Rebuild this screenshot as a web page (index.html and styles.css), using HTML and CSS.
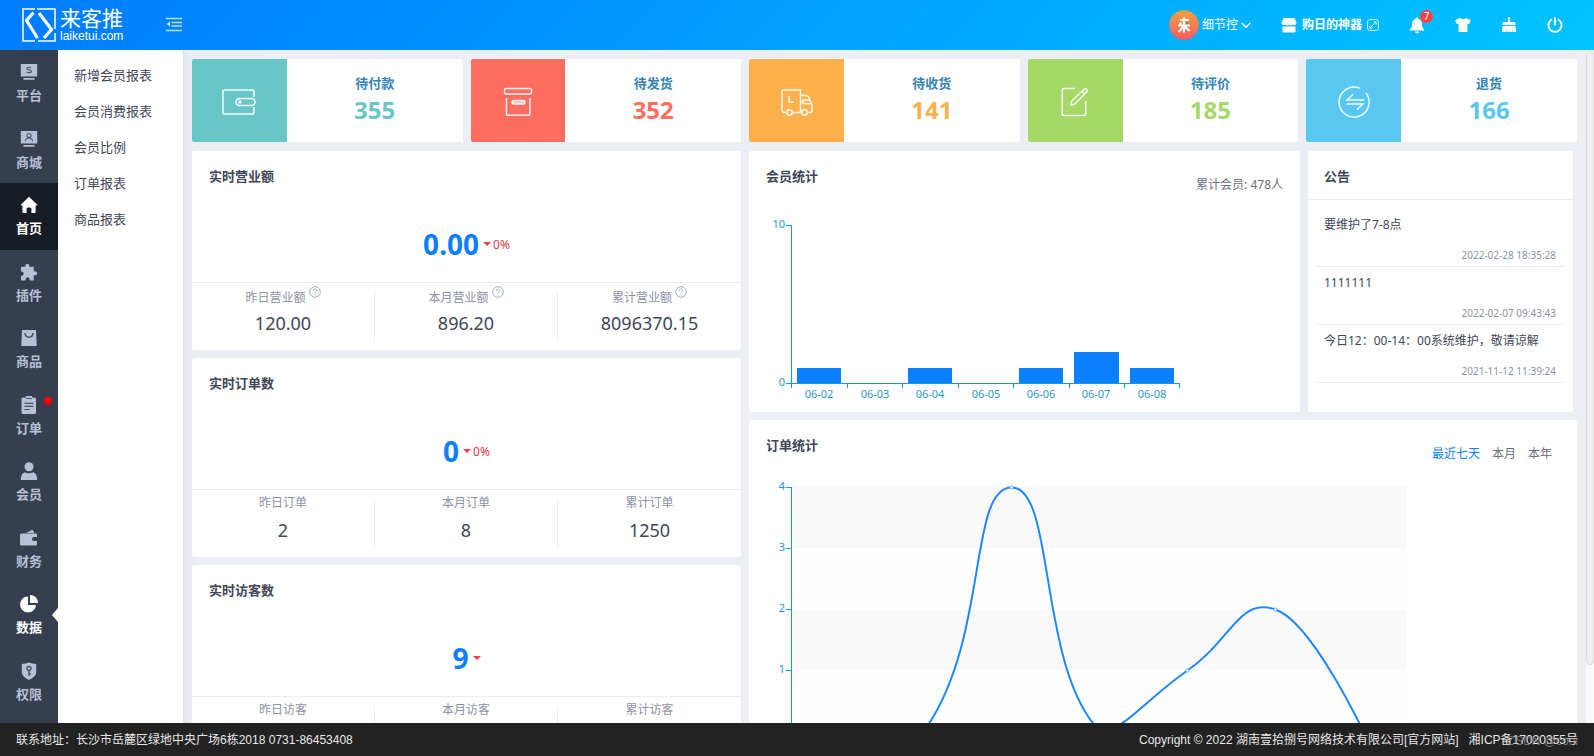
FILE: index.html
```html
<!DOCTYPE html>
<html lang="zh-CN">
<head>
<meta charset="utf-8">
<title>来客推</title>
<link rel="stylesheet" href="styles.css">
</head>
<body>
<div class="app">
  <header class="header">
    <a class="logo" href="#">
      <svg width="34" height="35" viewBox="0 0 34 35" fill="none" stroke="#fff"><path d="M13 1H1v32h12M16 33h17V25M15 1h18v20" stroke-width="1.500"/><path d="M11.500 4.500 4.500 12.500 15.500 30" stroke-width="3.200"/><path d="M17 5 29.500 21.500 22 30" stroke-width="3.200"/></svg>
      <span class="logo-text"><span class="logo-name">来客推</span><span class="logo-domain">laiketui.com</span></span>
    </a>
    <button class="icon-btn fold" aria-label="折叠菜单">
      <svg width="16" height="15" viewBox="0 0 16 15" fill="none" stroke="#b9dcff" stroke-width="1.300"><path d="M0 1.500h16M5.500 5.500H16M5.500 9H16M0 13.500h16"/><path d="M4 4.500v5L.5 7z" fill="#d3e8ff" stroke="none"/></svg>
    </button>
    <div class="tools">
      <button class="user"><span class="avatar"><svg width="30" height="30" viewBox="0 0 30 30"><defs><linearGradient id="av" x1="0" y1="0" x2="0" y2="1"><stop offset="0" stop-color="#f5a33a"/><stop offset="1" stop-color="#f95a62"/></linearGradient></defs><circle cx="15" cy="15" r="14.700" fill="url(#av)"/><path d="M11 10h9M9 15.500h12M15 7.500v15M15 16l-5.500 6M15 16l5.500 5M11 12.500l1 2" stroke="#fff" stroke-width="2.200" fill="none"/><circle cx="18.500" cy="13" r="1.200" fill="#3c9b62"/></svg></span>细节控<svg class="caret" width="10" height="7" viewBox="0 0 10 7" fill="none" stroke="#fff" stroke-width="1.400"><path d="M.8 1 5 5.300 9.200 1"/></svg></button>
      <a class="shop" href="#"><svg width="16" height="15" viewBox="0 0 16 15" fill="#fff"><path d="M2.500 0h11L15.500 4.500c0 3-3 3.200-3.800 1.700-1 1.800-3 1.500-3.700.2-.7 1.300-2.700 1.600-3.700-.2C3.500 7.700.5 7.500.5 4.500z"/><path d="M1.500 8.300c1.200.5 2.200.2 2.900-.4 1 .8 2.500.8 3.600 0 1.100.8 2.600.8 3.600 0 .7.600 1.700.9 2.900.4V13c0 1-.5 1.500-1.500 1.500H3c-1 0-1.500-.5-1.500-1.500z"/></svg><b>购日的神器</b><svg width="12" height="12" viewBox="0 0 12 12" fill="none" stroke="#d6f3ff"><rect x=".6" y=".6" width="10.800" height="10.800" rx="2"/><path d="M3 9 9 3M6.500 2.800h2.700v2.700M2.800 6.500v2.700h2.700"/></svg></a>
      <button class="icon-btn bell" aria-label="消息"><svg width="16" height="17" viewBox="0 0 16 17" fill="#fff"><path d="M8 .5c.8 0 1.200.6 1.200 1.300 2.500.6 3.800 2.700 3.800 5.200 0 3 .7 4.300 2.200 5.300v1.200H.8v-1.200C2.300 11.300 3 10 3 7c0-2.500 1.300-4.600 3.800-5.200C6.800 1.100 7.200.5 8 .5zM6 14.500h4c-.2 1.200-1 2-2 2s-1.800-.8-2-2z"/></svg><span class="badge">7</span></button>
      <button class="icon-btn" aria-label="主题"><svg width="16" height="16" viewBox="0 0 16 16" fill="#fff"><path d="M5 .8c.8 1.600 5.200 1.600 6 0l4.700 2.500-1.500 4-1.800-.6V15H3.500V6.700l-1.800.6-1.500-4z"/></svg></button>
      <button class="icon-btn" aria-label="清理缓存"><svg width="16" height="16" viewBox="0 0 16 16" fill="#fff"><path d="M6.900 0h2.200v5H13c1 0 1.500.5 1.500 1.500V8h-13V6.500c0-1 .5-1.500 1.500-1.500h3.900zM1.700 9h12.600l1 6h-3l-.5-2-.3 2H9.300L9 13l-.3 2H6.300L6 13l-1 2H.7z"/></svg></button>
      <button class="icon-btn" aria-label="退出"><svg width="16" height="16" viewBox="0 0 16 16" fill="none" stroke="#fff" stroke-width="1.900" stroke-linecap="round"><path d="M4.300 2.800a6.600 6.600 0 1 0 7.400 0M8 1v6.500"/></svg></button>
    </div>
  </header>

  <div class="body">
    <nav class="sidebar">
      <a href="#"><svg width="18" height="18" viewBox="0 0 18 18"><path d="M.8 1h16.400v12.500H.8zM3.500 15h11v1.700h-11z" fill="#b6c0d6"/><path d="M11.300 5c-.8-1-4.300-1.200-4.300.6 0 2 4.300.7 4.300 2.700 0 1.800-3.600 1.700-4.600.5" fill="none" stroke="#4a5568" stroke-width="1.200"/></svg>平台</a>
      <a href="#"><svg width="18" height="18" viewBox="0 0 18 18"><path d="M.8 1h16.400v12.500H.8zM3.500 15h11v1.700h-11z" fill="#b6c0d6"/><g fill="none" stroke="#4a5568" stroke-width="1.100"><circle cx="9" cy="5.500" r="2"/><path d="M5.500 11.300c0-4.500 7-4.500 7 0"/></g></svg>商城</a>
      <a class="current" href="#"><svg width="18" height="18" viewBox="0 0 18 18" fill="#fff"><path d="M9 .8 17 8.500c.4.500.2 1-.4 1h-1V16c0 .7-.4 1-1 1h-3.200v-4.500c0-1.500-4.800-1.500-4.800 0V17H3.400c-.6 0-1-.3-1-1V9.500h-1c-.6 0-.8-.5-.4-1z"/></svg>首页</a>
      <a href="#"><svg width="18" height="18" viewBox="0 0 18 19" fill="#b6c0d6"><path d="M.5 4h4.700C4.400-.3 10-.3 9.300 4H14v4.700c5-.8 5 5 0 4.200V18.500H9.800c.6-4.700-5-4.700-4.500 0H.5v-5c3.800.4 3.800-5 0-4.600z"/></svg>插件</a>
      <a href="#"><svg width="18" height="18" viewBox="0 0 18 18"><path d="M3 1h12c.8 0 1 .4 1.100 1l.6 13.500c0 1-.4 1.500-1.400 1.500H2.700c-1 0-1.400-.5-1.400-1.500L1.900 2c.1-.6.300-1 1.100-1z" fill="#b6c0d6"/><path d="M5 4c.3 5.500 7.700 5.500 8 0" fill="none" stroke="#4a5568" stroke-width="1.500"/></svg>商品</a>
      <a href="#"><svg width="18" height="18" viewBox="0 0 18 18"><rect x="1.500" y="1.500" width="14.500" height="16.500" rx="1.500" fill="#b6c0d6"/><path d="M6 0h6v2.500H6z" fill="#b6c0d6"/><path d="M6 2.500h6M4.500 7.300h9M4.500 10.300h9M4.500 13.500h5" stroke="#4a5568" stroke-width="1.200"/></svg>订单<i class="dot"></i></a>
      <a href="#"><svg width="18" height="18" viewBox="0 0 18 18" fill="#b6c0d6"><circle cx="9" cy="4.700" r="4.500"/><path d="M.8 18c0-5 2-7.500 4.500-7.500 1.500.9 5.900.9 7.400 0 2.500 0 4.500 2.500 4.500 7.500z"/></svg>会员</a>
      <a href="#"><svg width="18" height="18" viewBox="0 0 18 18" fill="#b6c0d6"><path d="M6 4 12.500.8l2 3.200zM1.800 4.500h14c.9 0 1.200.4 1.200 1.200V8h-3a2 2 0 0 0 0 4H17V15c0 1-.4 1.500-1.400 1.500H1.500C.5 16.500 0 16 0 15V6C0 5 .9 4.500 1.800 4.500z"/></svg>财务</a>
      <a class="open" href="#"><svg width="18" height="18" viewBox="0 0 18 18" fill="#fff"><path d="M8 1.500V10h8a8 8 0 1 1-8-8.500z"/><path d="M10 0a8 8 0 0 1 8 8h-8z"/></svg>数据</a>
      <a href="#"><svg width="18" height="18" viewBox="0 0 18 18"><path d="M9 .3c2 1.200 4.500 1.700 7.200 1.700v8c0 3.500-3.200 6-7.200 8-4-2-7.200-4.500-7.200-8V2C4.500 2 7 1.500 9 .3z" fill="#b6c0d6"/><g fill="none" stroke="#4a5568" stroke-width="1.400"><circle cx="9" cy="6.500" r="2"/><path d="M9 8.500V14M9 12h2"/></g></svg>权限</a>
    </nav>
    <nav class="submenu">
      <a href="#">新增会员报表</a><a href="#">会员消费报表</a><a href="#">会员比例</a><a href="#">订单报表</a><a href="#">商品报表</a>
    </nav>
    <main class="main">
      <section class="stats">
        <a class="stat teal" href="#"><span class="stat-icon"><svg width="34" height="26" viewBox="0 0 34 26"><path d="M32 8V2c0-.6-.4-1-1-1H2c-.6 0-1 .4-1 1v22c0 .6.400 1 1 1h29c.6 0 1-.4 1-1v-6"/><rect x="14" y="9.500" width="19" height="7" rx="3.500"/><circle cx="18" cy="13" r="1"/></svg></span><span class="stat-text"><b>待付款</b><strong>355</strong></span></a>
        <a class="stat red" href="#"><span class="stat-icon"><svg width="30" height="30" viewBox="0 0 30 30"><rect x="1.500" y="1.500" width="27" height="5.500" rx="1.500"/><path d="M3.500 11v16c0 .8.400 1.200 1.200 1.200h21c.8 0 1.200-.4 1.200-1.200V11"/><rect x="9" y="13.500" width="13" height="3.500" rx="1.500" fill="#ffc4bd"/></svg></span><span class="stat-text"><b>待发货</b><strong>352</strong></span></a>
        <a class="stat orange" href="#"><span class="stat-icon"><svg width="32" height="27" viewBox="0 0 32 27"><path d="M5 23.500H3.500c-1.700 0-2.500-.8-2.500-2.500V2c0-.7.300-1 1-1h17.500v22.500H12M19.500 6.500h5c2.500 0 3.500 1.300 4.200 4l2.300 5V22c0 1-.5 1.500-1.500 1.500H27"/><path d="M30.500 14.500H23c-1 0-1.500-.5-1.500-1.500 0-1.500 1-2 2-2h5M8 7v6h5"/><circle cx="8.500" cy="23.500" r="2.700"/><circle cx="23.500" cy="23.500" r="2.700"/></svg></span><span class="stat-text"><b>待收货</b><strong>141</strong></span></a>
        <a class="stat green" href="#"><span class="stat-icon"><svg width="28" height="30" viewBox="0 0 28 30"><path d="M14 1.500H2.500c-.8 0-1.200.4-1.200 1.200v24.600c0 .8.400 1.200 1.200 1.200h21c.8 0 1.200-.4 1.200-1.200V14"/><path d="M10.500 14.200 22.700 2.500c1-1 2.200-.9 2.900-.2s.8 1.900-.2 2.900L13.700 17.200l-3.500.9zM21 4l3 3"/></svg></span><span class="stat-text"><b>待评价</b><strong>185</strong></span></a>
        <a class="stat blue" href="#"><span class="stat-icon"><svg width="32" height="32" viewBox="0 0 32 32"><path d="M22 2.300A15 15 0 1 0 28 7M15 8.500l-6 5.500h17M8.500 18H25l-6 5.500"/></svg></span><span class="stat-text"><b>退货</b><strong>166</strong></span></a>
      </section>
      <div class="columns">
        <div class="left">
          <section class="card live">
            <h2>实时营业额</h2>
            <div class="headline"><strong>0.00</strong><i class="down"></i><span>0%</span></div>
            <dl class="figures"><div><dt>昨日营业额<svg class="q" viewBox="0 0 12 12"><circle cx="6" cy="6" r="5.300"/><path d="M4.300 4.800c0-2.300 3.400-2.200 3.400-.2C7.700 6 6 5.800 6 7.300M6 8.300v1"/></svg></dt><dd>120.00</dd></div><div><dt>本月营业额<svg class="q" viewBox="0 0 12 12"><circle cx="6" cy="6" r="5.300"/><path d="M4.300 4.800c0-2.300 3.400-2.200 3.400-.2C7.700 6 6 5.800 6 7.300M6 8.300v1"/></svg></dt><dd>896.20</dd></div><div><dt>累计营业额<svg class="q" viewBox="0 0 12 12"><circle cx="6" cy="6" r="5.300"/><path d="M4.300 4.800c0-2.300 3.400-2.200 3.400-.2C7.700 6 6 5.800 6 7.300M6 8.300v1"/></svg></dt><dd>8096370.15</dd></div></dl>
          </section>
          <section class="card live">
            <h2>实时订单数</h2>
            <div class="headline"><strong>0</strong><i class="down"></i><span>0%</span></div>
            <dl class="figures plain"><div><dt>昨日订单</dt><dd>2</dd></div><div><dt>本月订单</dt><dd>8</dd></div><div><dt>累计订单</dt><dd>1250</dd></div></dl>
          </section>
          <section class="card live">
            <h2>实时访客数</h2>
            <div class="headline"><strong>9</strong><i class="down"></i></div>
            <dl class="figures plain"><div><dt>昨日访客</dt></div><div><dt>本月访客</dt></div><div><dt>累计访客</dt></div></dl>
          </section>
        </div>
        <div class="right">
          <div class="right-top">
            <section class="card chart-card">
              <div class="card-head"><h2>会员统计</h2><p>累计会员: 478人</p></div>
              <svg class="chart" width="440" height="190" viewBox="0 0 440 190">
                <g class="bars"><rect x="48" y="152" width="44" height="16"/><rect x="159" y="152" width="44" height="16"/><rect x="270" y="152" width="44" height="16"/><rect x="325" y="136" width="45" height="32"/><rect x="381" y="152" width="44" height="16"/></g>
                <path class="axis" d="M37 9.500h5M42.500 9v163M37 167.500h394M98.500 167v5M153.500 167v5M209.500 167v5M264.500 167v5M320.500 167v5M375.500 167v5M430.500 167v5"/>
                <g class="labels"><g text-anchor="end"><text x="36" y="12">10</text><text x="36" y="170">0</text></g><g text-anchor="middle"><text x="70" y="182">06-02</text><text x="126" y="182">06-03</text><text x="181" y="182">06-04</text><text x="237" y="182">06-05</text><text x="292" y="182">06-06</text><text x="347" y="182">06-07</text><text x="403" y="182">06-08</text></g></g>
              </svg>
            </section>
            <section class="card notices">
              <h2>公告</h2>
              <ul>
                <li><a href="#">要维护了7-8点</a><time>2022-02-28 18:35:28</time></li>
                <li><a href="#">1111111</a><time>2022-02-07 09:43:43</time></li>
                <li><a href="#">今日12：00-14：00系统维护，敬请谅解</a><time>2021-11-12 11:39:24</time></li>
              </ul>
            </section>
          </div>
          <section class="card chart-card orders">
            <div class="card-head"><h2>订单统计</h2><div class="tabs"><button class="on">最近七天</button><button>本月</button><button>本年</button></div></div>
            <svg class="chart" width="670" height="290" viewBox="0 0 670 290">
              <path d="M43 2h615v61H43zM43 125h615v61H43z" fill="#f9f9f9"/>
              <path d="M43 63h615v62H43zM43 186h615v61H43z" fill="#fefefe"/>
              <path class="axis" d="M37 2.500h5M37 63.500h5M37 124.500h5M37 185.500h5M37 246.500h621M42.500 2v250"/>
              <path class="curve" d="M87 246C87 246 153 246 175 246C240.500 155 218.700 2.500 262.700 2.500S288.300 181 350.600 246C376 246 394.500 216 438.500 185.500S489.800 112 526.400 124.500S614 246 614 246"/>
              <g class="points"><circle cx="262.700" cy="2.500" r="1.600"/><circle cx="438.500" cy="185.500" r="1.600"/><circle cx="526.400" cy="124.500" r="1.600"/></g>
              <g class="labels" text-anchor="end"><text x="36" y="5">4</text><text x="36" y="66">3</text><text x="36" y="127">2</text><text x="36" y="188">1</text></g>
            </svg>
          </section>
        </div>
      </div>
    </main>
    <div class="scroll"><div class="thumb"></div></div>
  </div>

  <footer class="footer">
    <span>联系地址：长沙市岳麓区绿地中央广场6栋2018 0731-86453408</span>
    <span class="copy"><span>Copyright © 2022 湖南壹拾捌号网络技术有限公司[<a href="#">官方网站</a>]</span><span>湘ICP备17020355号</span><span class="mark">CSDN @coni</span></span>
  </footer>
</div>
</body>
</html>
```
FILE: styles.css
```css
* { box-sizing: border-box; }
body, h2, p, ul, dl, dd { margin: 0; padding: 0; }
body { font: 12px/18px "Noto Sans", "Noto Sans CJK SC", sans-serif; color: #414658; }
a { color: inherit; text-decoration: none; }
button { border: 0; padding: 0; background: none; color: inherit; font: inherit; cursor: pointer; }
svg { display: block; flex: none; overflow: visible; }
ul { list-style: none; }

.app { display: flex; flex-direction: column; height: 100vh; overflow: hidden; }

.header { flex: none; display: flex; align-items: center; height: 50px; padding: 0 31px 0 22px; color: #fff; background: linear-gradient(135deg, #007bff, #00c4ff); }
.logo { display: flex; gap: 4px; align-items: center; }
.logo-text { display: flex; flex-direction: column; }
.logo-name { font-size: 21px; line-height: 22px; font-weight: 400; }
.logo-domain { font: 12px/14px "Liberation Sans", sans-serif; }
.icon-btn { position: relative; display: flex; }
.fold { margin-left: 43px; padding-bottom: 2px; }
.tools { display: flex; align-items: center; margin-left: auto; gap: 30px; }
.user { display: flex; align-items: center; gap: 3px; }
.shop { display: flex; align-items: center; gap: 5px; }
.badge { position: absolute; left: 11px; top: -7px; width: 13px; height: 13px; border-radius: 50%; background: #ff4040; font-size: 10px; line-height: 13px; text-align: center; }

.body { flex: 1; display: flex; min-height: 0; }
.sidebar { flex: none; width: 58px; display: flex; flex-direction: column; padding-bottom: 8px; background: #353f4f; color: #b6c0d6; font-weight: 700; }
.sidebar a { position: relative; flex: 1; display: flex; flex-direction: column; align-items: center; gap: 5px; padding-top: 13px; font-size: 13px; line-height: 18px; min-height: 0; }
.sidebar .current { background: #161d24; color: #fff; }
.sidebar .open { color: #fff; }
.sidebar .open::after { content: ""; position: absolute; right: 0; top: 26px; border: 7px solid transparent; border-right: 6px solid #fff; border-left: 0; }
.dot { position: absolute; right: 6px; top: 14px; width: 8px; height: 8px; border-radius: 50%; background: #f00; }
.submenu { flex: none; width: 125px; padding: 7px 16px; background: #fff; font-size: 13px; line-height: 36px; }
.submenu a { display: block; }

.main { flex: 1; min-width: 0; padding: 9px 9px 0; overflow: hidden; background: linear-gradient(90deg, #e2e7ec, #ebeff4 9px); }
.stats { display: grid; grid-template-columns: repeat(5, 1fr); gap: 8px; margin-bottom: 9px; }
.stat { display: flex; height: 83px; border-radius: 2px; overflow: hidden; background: #fff; }
.stat-icon { width: 35%; display: flex; align-items: center; justify-content: center; padding-top: 3px; }
.stat-icon svg { fill: none; stroke: #fff; stroke-width: 1.5; stroke-opacity: .9; }
.stat-text { flex: 1; display: flex; flex-direction: column; align-items: center; padding-top: 14px; }
.stat-text b { font-size: 13px; line-height: 20px; color: #3484b4; }
.stat-text strong { font-size: 24px; line-height: 34px; }
.teal strong { color: #68c7c6; } .teal .stat-icon { background: #68c7c6; }
.red strong { color: #ff6c60; } .red .stat-icon { background: #ff6c60; }
.orange strong { color: #feb04c; } .orange .stat-icon { background: #feb04c; }
.green strong { color: #a6d867; } .green .stat-icon { background: #a6d867; }
.blue strong { color: #58c8f3; } .blue .stat-icon { background: #58c8f3; }

.columns { display: grid; grid-template-columns: 549fr 828fr; gap: 8px; }
.left, .right { display: flex; flex-direction: column; gap: 8px; min-width: 0; }
.card { background: #fff; border-radius: 3px; }
.card h2 { font-size: 13px; line-height: 20px; font-weight: 700; color: #414658; }
.live { height: 199px; }
.live h2 { padding: 15px 17px 0; }
.headline { display: flex; align-items: center; justify-content: center; height: 96px; padding-top: 20px; gap: 4px; color: #e33b4c; }
.headline strong { font-size: 28px; line-height: 38px; color: #0a80ff; }
.headline span { margin-left: -2px; padding-top: 1px; }
.down { border: 4px solid transparent; border-top-color: #ff3b46; border-bottom: 0; }
.figures { display: grid; grid-template-columns: repeat(3, 1fr); padding-top: 9px; border-top: 1px solid #ebecf0; text-align: center; }
.figures > div { height: 50px; border-right: 1px solid #ebecf0; }
.figures > div:last-child { border-right: 0; }
.figures dt { display: flex; justify-content: center; gap: 3px; height: 18px; line-height: 12px; color: #8b91a5; }
.figures dd { font-size: 18px; line-height: 26px; }
.q { width: 12px; height: 12px; fill: none; stroke: #a4abc0; margin-top: -6px; }
.plain dt { line-height: 8px; }

.right-top { display: grid; grid-template-columns: 551fr 265fr; gap: 8px; padding-right: 4px; }
.card-head { display: flex; justify-content: space-between; padding: 15px 17px 0; height: 65px; }
.card-head p { padding-top: 10px; color: #6a6f7b; }
.chart-card { height: 261px; }
.bars { fill: #0a80ff; }
.axis { fill: none; stroke: #1c96d4; }
.labels { font-size: 11px; fill: #2a97cc; }
.notices h2 { padding: 15px 16px 13px; border-bottom: 1px solid #ebecf0; }
.notices ul { padding: 9px 9px 0 8px; }
.notices li { height: 58px; padding: 7px 8px 0; border-bottom: 1px solid #ebecf0; }
.notices li a { display: block; }
.notices time { display: block; margin-top: 12px; font-size: 10px; line-height: 18px; text-align: right; color: #8b91a5; }
.orders { height: 320px; }
.tabs { display: flex; gap: 12px; padding: 10px 8px 0 0; height: 28px; color: #6a6f7b; }
.tabs .on { color: #0a80ff; }
.curve { fill: none; stroke: #1e88fa; stroke-width: 2; }
.points { fill: #fff; stroke: #5aaafa; stroke-width: 1; }

.scroll { flex: none; width: 8px; background: #fafafa; }
.thumb { height: 615px; max-height: 100%; border: 1px solid #ddd; border-radius: 4px; background: #efefef; }

.footer { flex: none; display: flex; align-items: center; justify-content: space-between; height: 33px; padding: 0 16px; background: #222; color: #e8e8e8; font-family: "Liberation Sans", "Noto Sans CJK SC", sans-serif; }
.copy { position: relative; display: flex; gap: 10px; }
.mark { position: absolute; right: 0; top: 1px; color: #999; opacity: .7; }
```
